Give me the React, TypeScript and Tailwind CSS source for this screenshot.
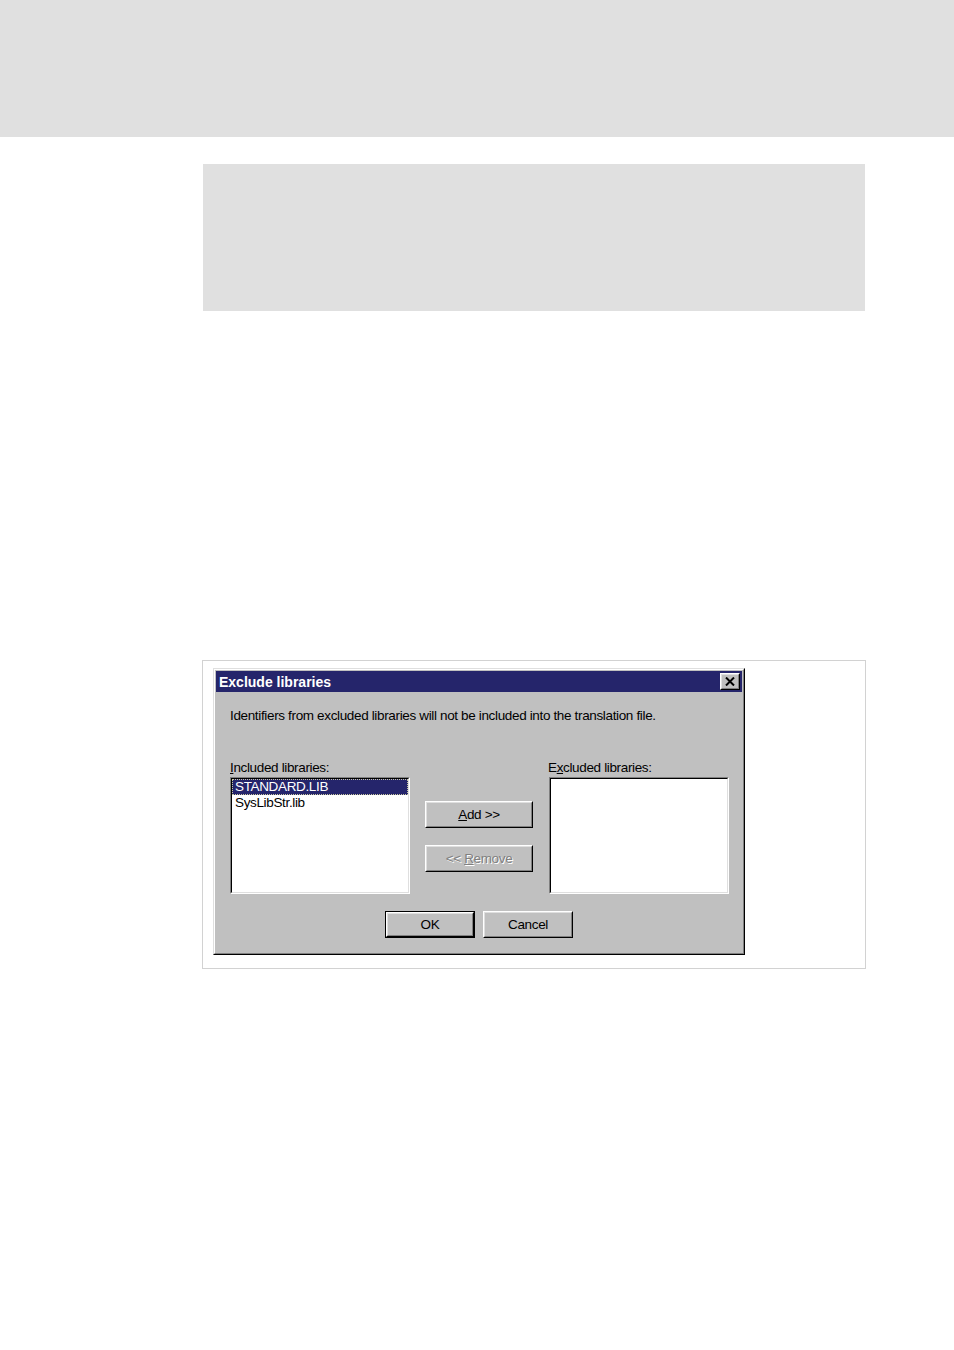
const narrow = "font-['Liberation_Sans_Narrow','Liberation_Sans',Arial,sans-serif] text-[13.5px] tracking-[-0.35px]";

function Raised({ children, className = "" }: { children: React.ReactNode; className?: string }) {
  return (
    <div
      className={`border border-t-white border-l-white border-b-black border-r-black ${className}`}
    >
      <div className="flex h-full w-full items-center justify-center border border-t-[#dfdfdf] border-l-[#dfdfdf] border-b-[#808080] border-r-[#808080] bg-[#c0c0c0]">
        {children}
      </div>
    </div>
  );
}

function Sunken({ children }: { children?: React.ReactNode }) {
  return (
    <div className="h-[117px] w-[180px] border border-t-[#808080] border-l-[#808080] border-b-white border-r-white">
      <div className="h-full w-full border border-t-black border-l-black border-b-[#dfdfdf] border-r-[#dfdfdf] bg-white">
        {children}
      </div>
    </div>
  );
}

function CloseButton() {
  return (
    <Raised className="h-[17px] w-[20px]">
      <svg width="10" height="9" viewBox="0 0 10 9">
        <path d="M1 0.5 L9 8.5 M9 0.5 L1 8.5" stroke="#000" strokeWidth="2" />
      </svg>
    </Raised>
  );
}

function Dialog() {
  return (
    <div className="h-[287px] w-[532px] border border-t-[#dfdfdf] border-l-[#dfdfdf] border-b-black border-r-black">
      <div className="h-full w-full border border-t-white border-l-white border-b-[#808080] border-r-[#808080] bg-[#c0c0c0] p-px">
        <div className="flex h-[21px] items-center justify-between bg-[#25256b] pl-[3px] pr-[2px]">
          <span className="font-['Liberation_Sans',Arial,sans-serif] text-[14px] font-bold leading-none text-white">
            Exclude libraries
          </span>
          <CloseButton />
        </div>

        <div className={`${narrow} leading-[16px] text-black`}>
          <p className="mt-[16px] pl-[14px]">
            Identifiers from excluded libraries will not be included into the translation file.
          </p>

          <div className="mt-[36px] flex pl-[14px]">
            <div className="flex w-[180px] flex-col">
              <div className="h-[17px]">
                <u>I</u>ncluded libraries:
              </div>
              <Sunken>
                <div className="flex h-[16px] items-center border border-dotted border-[#c8c8a0] bg-[#25256b] pl-[2px] text-white">
                  STANDARD.LIB
                </div>
                <div className="flex h-[16px] items-center pl-[3px]">SysLibStr.lib</div>
              </Sunken>
            </div>

            <div className="ml-[15px] flex w-[108px] flex-col pt-[41px]">
              <Raised className="h-[27px] w-[108px]">
                <span>
                  <u>A</u>dd &gt;&gt;
                </span>
              </Raised>
              <Raised className="mt-[17px] h-[27px] w-[108px]">
                <span className="text-[#808080] [text-shadow:1px_1px_0_#fff]">
                  &lt;&lt; <u>R</u>emove
                </span>
              </Raised>
            </div>

            <div className="ml-[15px] flex w-[181px] flex-col">
              <div className="h-[17px]">
                E<u>x</u>cluded libraries:
              </div>
              <div className="pl-px">
                <Sunken />
              </div>
            </div>
          </div>

          <div className="mt-[17px] flex pl-[169px]">
            <div className="h-[27px] w-[90px] border border-black">
              <Raised className="h-full w-full">
                <span>OK</span>
              </Raised>
            </div>
            <Raised className="ml-[8px] h-[27px] w-[90px]">
              <span>Cancel</span>
            </Raised>
          </div>
        </div>
      </div>
    </div>
  );
}

export default function App() {
  return (
    <div className="min-h-[1350px] w-[954px] bg-white">
      <div className="h-[137px] bg-[#e0e0e0]" />
      <div className="ml-[203px] mt-[27px] h-[147px] w-[662px] bg-[#e0e0e0]" />
      <div className="ml-[202px] mt-[349px] h-[309px] w-[664px] border border-[#d2d2d2] pl-[10px] pt-[7px]">
        <Dialog />
      </div>
    </div>
  );
}
